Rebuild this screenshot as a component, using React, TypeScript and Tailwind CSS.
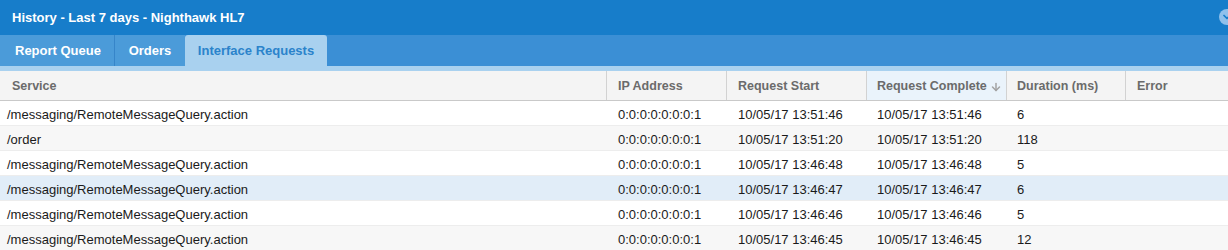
import { ArrowDown, ChevronDown } from "lucide-react";

const rows = [
  ["/messaging/RemoteMessageQuery.action", "0:0:0:0:0:0:0:1", "10/05/17 13:51:46", "10/05/17 13:51:46", "6"],
  ["/order", "0:0:0:0:0:0:0:1", "10/05/17 13:51:20", "10/05/17 13:51:20", "118"],
  ["/messaging/RemoteMessageQuery.action", "0:0:0:0:0:0:0:1", "10/05/17 13:46:48", "10/05/17 13:46:48", "5"],
  ["/messaging/RemoteMessageQuery.action", "0:0:0:0:0:0:0:1", "10/05/17 13:46:47", "10/05/17 13:46:47", "6"],
  ["/messaging/RemoteMessageQuery.action", "0:0:0:0:0:0:0:1", "10/05/17 13:46:46", "10/05/17 13:46:46", "5"],
  ["/messaging/RemoteMessageQuery.action", "0:0:0:0:0:0:0:1", "10/05/17 13:46:45", "10/05/17 13:46:45", "12"],
];

const selectedRow = 3;

export default function App() {
  return (
    <div
      className="w-[1228px] h-[250px] overflow-hidden bg-white"
      style={{ fontFamily: '"Liberation Sans", Arial, sans-serif' }}
    >
      {/* title bar */}
      <div className="h-[35px] bg-[#177dca] flex items-center justify-between pl-3 relative">
        <span className="text-[13px] font-bold text-white">
          History - Last 7 days - Nighthawk HL7
        </span>
        <span className="absolute left-[1219px] top-[9px] w-4 h-4 rounded-full bg-[#8fc0eb] flex items-center justify-center">
          <ChevronDown size={12} strokeWidth={3.5} className="text-[#177dca]" />
        </span>
      </div>

      {/* tabs */}
      <div className="h-[31px] bg-[#3b8fd5] flex items-end">
        <div className="h-[31px] w-[115px] bg-[#4b9bd9] flex items-center pl-[15px] text-[13px] font-bold text-white border-r border-[#3685c9]">
          Report Queue
        </div>
        <div className="h-[31px] w-[70px] bg-[#4b9bd9] flex items-center justify-center text-[13px] font-bold text-white">
          Orders
        </div>
        <div className="h-[31px] w-[142px] bg-[#a9d1ef] rounded-t-[3px] flex items-center justify-center text-[13px] font-bold text-[#2b83cb]">
          Interface Requests
        </div>
      </div>
      <div className="h-[5px] bg-[#a9d1ef]" />

      {/* grid header */}
      <div className="flex h-[30px] bg-[#f4f4f4] border-b border-[#c9c9c9] text-[12.5px] font-bold text-[#6b6b6b] whitespace-nowrap">
        <div className="w-[606px] flex items-center pl-3 pt-[2px]">Service</div>
        <div className="w-[120px] flex items-center pl-[11px] pt-[2px] border-l border-[#d2d2d2]">IP Address</div>
        <div className="w-[140px] flex items-center pl-[11px] pt-[2px] border-l border-[#d2d2d2]">Request Start</div>
        <div className="w-[140px] flex items-center pl-[10px] pt-[2px] border-l border-[#d2d2d2] bg-[#eaf3fb]">
          Request Complete
          <ArrowDown size={12} strokeWidth={3} className="ml-[3px] text-[#a3a3a3]" />
        </div>
        <div className="w-[119px] flex items-center pl-[10px] pt-[2px] border-l border-[#d2d2d2]">Duration (ms)</div>
        <div className="flex-1 flex items-center pl-[11px] pt-[2px] border-l border-[#d2d2d2]">Error</div>
      </div>

      {/* grid rows */}
      {rows.map((r, i) => (
        <div
          key={i}
          className={
            "flex h-[25px] pt-[3px] border-b border-[#ededed] text-[13px] text-[#1a1a1a] whitespace-nowrap " +
            (i === selectedRow ? "bg-[#e1edf8]" : i % 2 === 1 ? "bg-[#f7f7f7]" : "bg-white")
          }
        >
          <div className="w-[606px] flex items-center pl-[7px]">{r[0]}</div>
          <div className="w-[120px] flex items-center pl-[12px]">{r[1]}</div>
          <div className="w-[140px] flex items-center pl-[12px]">{r[2]}</div>
          <div className="w-[140px] flex items-center pl-[11px]">{r[3]}</div>
          <div className="w-[119px] flex items-center pl-[11px]">{r[4]}</div>
          <div className="flex-1" />
        </div>
      ))}
    </div>
  );
}
